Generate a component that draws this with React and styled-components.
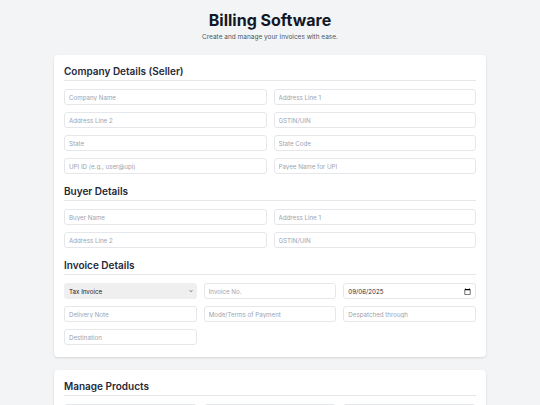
import React from 'react'
import styled, { createGlobalStyle } from 'styled-components'

const GlobalStyle = createGlobalStyle`
  html, body {
    margin: 0;
    padding: 0;
    background: #f3f4f6;
    font-family: Inter, "Liberation Sans", sans-serif;
    color: #1f2937;
  }
  * {
    box-sizing: border-box;
  }
`

const Page = styled.div`
  width: 432px;
  margin: 0 auto;
  padding-top: 10px;
  padding-bottom: 20px;
`

const Header = styled.header`
  text-align: center;
  margin-bottom: 13px;
`

const Title = styled.h1`
  margin: 0;
  font-size: 16px;
  line-height: 20px;
  font-weight: 700;
  color: #111827;
`

const Subtitle = styled.p`
  margin: 2px 0 0;
  font-size: 6.5px;
  line-height: 10px;
  color: #4b5563;
`

const Card = styled.section`
  background: #ffffff;
  border-radius: 4px;
  box-shadow: 0 1px 3px rgba(0, 0, 0, 0.08), 0 1px 2px rgba(0, 0, 0, 0.05);
  padding: 10px 10px 12px;
  margin-bottom: 13px;
`

const SectionTitle = styled.h2`
  margin: ${(p) => (p.$first ? '0' : '11px')} 0 8px;
  padding-bottom: 2px;
  border-bottom: 1px solid #e5e7eb;
  font-size: 10px;
  line-height: 13px;
  font-weight: 600;
  color: #1f2937;
`

const Grid = styled.div`
  display: grid;
  grid-template-columns: repeat(${(p) => p.$cols}, 1fr);
  gap: 7px;
`

const Input = styled.input`
  display: block;
  width: 100%;
  height: 16px;
  margin: 0;
  padding: 0 4px;
  border: 1px solid #e5e7eb;
  border-radius: 3px;
  background: #ffffff;
  font-family: Inter, "Liberation Sans", sans-serif;
  font-size: 6.2px;
  color: #1f2937;
  outline: none;

  &::placeholder {
    color: #9ca3af;
  }

  &::-webkit-datetime-edit-text,
  &::-webkit-datetime-edit-day-field,
  &::-webkit-datetime-edit-month-field,
  &::-webkit-datetime-edit-year-field,
  &::-webkit-datetime-edit-fields-wrapper {
    padding: 0;
  }

  &::-webkit-calendar-picker-indicator {
    width: 7px;
    height: 7px;
    padding: 0;
    margin: 0;
  }
`

const SelectWrap = styled.div`
  position: relative;
  height: 16px;
`

const Select = styled.select`
  display: block;
  appearance: none;
  width: 100%;
  height: 16px;
  margin: 0;
  padding: 0 4px;
  border: 1px solid #efefef;
  border-radius: 3px;
  background: #efefef;
  font-family: Inter, "Liberation Sans", sans-serif;
  font-size: 6.2px;
  color: #111827;
  outline: none;
`

const Chevron = styled.svg`
  position: absolute;
  right: 4px;
  top: 6px;
  width: 4px;
  height: 4px;
  pointer-events: none;
`

const App = () => {
  return (
    <>
      <GlobalStyle />
      <Page>
        <Header>
          <Title>Billing Software</Title>
          <Subtitle>Create and manage your invoices with ease.</Subtitle>
        </Header>

        <Card>
          <SectionTitle $first>Company Details (Seller)</SectionTitle>
          <Grid $cols={2}>
            <Input placeholder='Company Name' />
            <Input placeholder='Address Line 1' />
            <Input placeholder='Address Line 2' />
            <Input placeholder='GSTIN/UIN' />
            <Input placeholder='State' />
            <Input placeholder='State Code' />
            <Input placeholder='UPI ID (e.g., user@upi)' />
            <Input placeholder='Payee Name for UPI' />
          </Grid>

          <SectionTitle>Buyer Details</SectionTitle>
          <Grid $cols={2}>
            <Input placeholder='Buyer Name' />
            <Input placeholder='Address Line 1' />
            <Input placeholder='Address Line 2' />
            <Input placeholder='GSTIN/UIN' />
          </Grid>

          <SectionTitle>Invoice Details</SectionTitle>
          <Grid $cols={3}>
            <SelectWrap>
              <Select defaultValue='tax'>
                <option value='tax'>Tax Invoice</option>
                <option value='proforma'>Proforma Invoice</option>
              </Select>
              <Chevron viewBox='0 0 10 10'>
                <path d='M2 3.5 L5 6.5 L8 3.5' fill='none' stroke='#1f2937' strokeWidth='1.8' />
              </Chevron>
            </SelectWrap>
            <Input placeholder='Invoice No.' />
            <Input type='date' defaultValue='2025-09-06' />
            <Input placeholder='Delivery Note' />
            <Input placeholder='Mode/Terms of Payment' />
            <Input placeholder='Despatched through' />
            <Input placeholder='Destination' />
          </Grid>
        </Card>

        <Card>
          <SectionTitle $first>Manage Products</SectionTitle>
          <Grid $cols={3}>
            <Input placeholder='Product Name' />
            <Input placeholder='HSN/SAC' />
            <Input placeholder='Rate' />
          </Grid>
        </Card>
      </Page>
    </>
  )
}

export default App
